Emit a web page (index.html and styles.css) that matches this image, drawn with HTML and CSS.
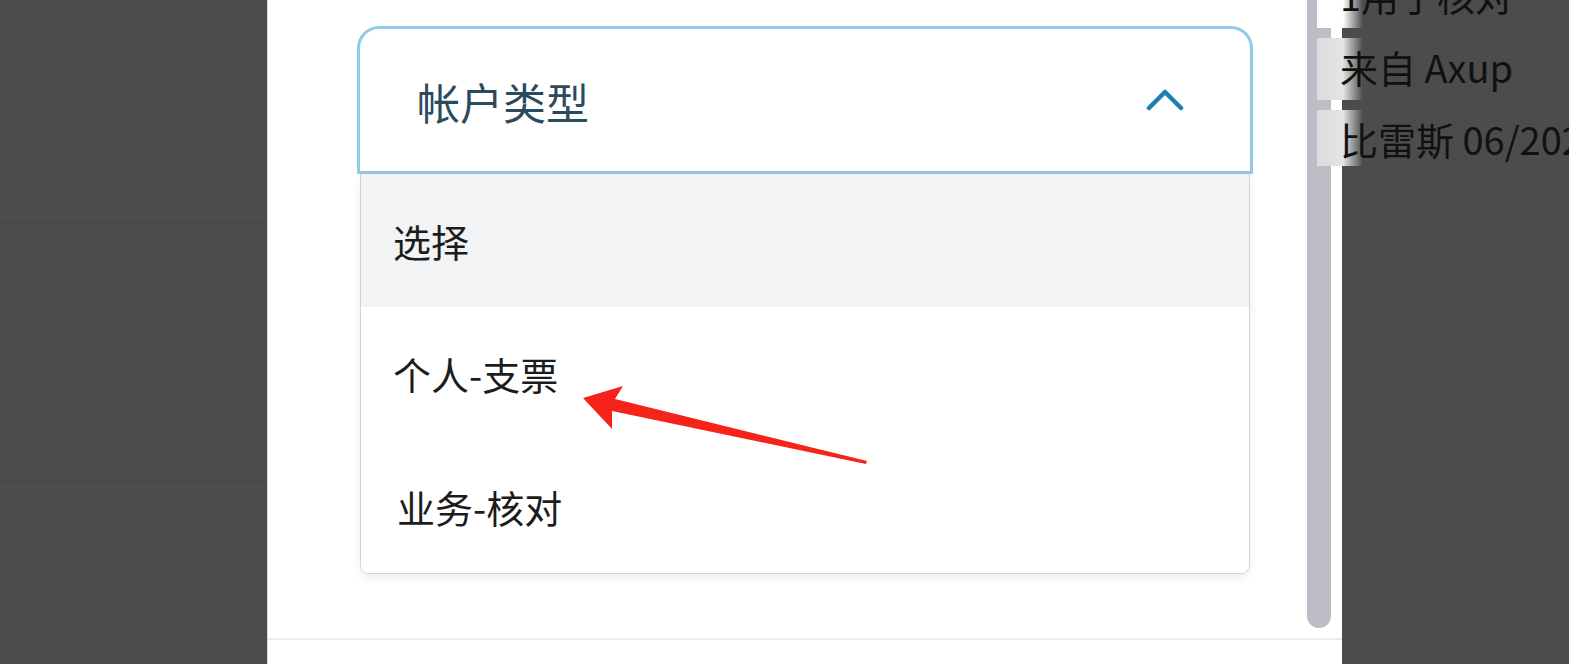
FILE: index.html
```html
<!DOCTYPE html>
<html lang="zh">
<head>
<meta charset="utf-8">
<title>帐户类型</title>
<link rel="stylesheet" href="styles.css">
</head>
<body>
<div class="page">
  <div class="backdrop backdrop-left">
    <div class="bd-row bd-r1"></div>
    <div class="bd-row bd-r2"></div>
    <div class="bd-row bd-r3"></div>
  </div>
  <div class="modal">
    <div class="modal-body">
      <div class="content">
        <div class="select">
          <div class="select-head">
            <span class="select-label">帐户类型</span>
            <svg class="chevron" width="40" height="24" viewBox="0 0 40 24" aria-hidden="true">
              <polyline points="3,20 19,4 35,20" fill="none" stroke="#1d7fb2" stroke-width="4.5" stroke-linecap="round" stroke-linejoin="round"/>
            </svg>
          </div>
          <ul class="options">
            <li class="option option-active">选择</li>
            <li class="option">个人-支票</li>
            <li class="option option-shift">业务-核对</li>
          </ul>
        </div>
      </div>
      <div class="scrollbar"></div>
    </div>
    <div class="modal-footer"></div>
  </div>
  <div class="backdrop backdrop-right"></div>

  <div class="side-tips">
    <div class="tip tip-white">1用于核对</div>
    <div class="tip">来自 Axup</div>
    <div class="tip tip-short">比雷斯 06/2020</div>
  </div>

  <svg class="annot" width="1569" height="664" viewBox="0 0 1569 664" aria-hidden="true">
    <polygon points="583,398 623,386 615,399 867,461 866,464 612,411 612,429" fill="#f5231a"/>
  </svg>
</div>
</body>
</html>
```
FILE: styles.css
```css
html, body {
  margin: 0;
  padding: 0;
}
body {
  background: #4c4c4c;
  font-family: "Noto Sans", "Noto Sans CJK SC", sans-serif;
  overflow: hidden;
}
.page {
  position: relative;
  width: 1569px;
  height: 664px;
  display: flex;
  overflow: hidden;
}
.backdrop {
  background: #4c4c4c;
  height: 664px;
}
.backdrop-left {
  width: 267px;
  display: flex;
  flex-direction: column;
}
.bd-row {
  border-bottom: 1px solid #464646;
}
.bd-r1 { height: 223px; }
.bd-r2 { height: 154px; }
.bd-r3 { height: 101px; }
.backdrop-right {
  flex: 1;
}
.modal {
  width: 1074px;
  border-left: 1px solid #d2d2d2;
  background: #fff;
  display: flex;
  flex-direction: column;
}
.modal-body {
  height: 638px;
  display: flex;
}
.content {
  flex: 1;
  padding: 26px 0 0 89px;
}
.select {
  width: 896px;
}
.select-head {
  height: 142px;
  border: 3px solid #8ecbe8;
  border-bottom-color: #98c6df;
  border-radius: 22px 22px 0 0;
  display: flex;
  align-items: center;
  justify-content: space-between;
  padding: 0 64px 0 57px;
}
.select-label {
  font-family: "Noto Sans CJK SC", sans-serif;
  font-size: 43px;
  color: #2c4a5d;
  line-height: 1;
  margin-top: 2px;
}
.chevron {
  display: block;
}
.options {
  list-style: none;
  margin: 0 3px;
  padding: 0;
  border: 1px solid #d2d2d4;
  border-top: none;
  border-radius: 0 0 9px 9px;
  box-shadow: 0 4px 10px rgba(0, 0, 0, 0.07);
  overflow: hidden;
}
.option {
  height: 133px;
  display: flex;
  align-items: center;
  padding-left: 32px;
  font-family: "Noto Sans CJK SC", sans-serif;
  font-size: 38px;
  color: #1c1c1c;
  background: #fff;
}
.option-active {
  background: #f1f3f5;
}
.option-shift {
  padding-left: 36px;
}
.scrollbar {
  width: 24px;
  height: 628px;
  background: #bebdc5;
  border-radius: 0 0 12px 12px;
  margin-right: 11px;
}
.modal-footer {
  border-top: 2px solid #ececef;
  flex: 1;
}
.side-tips {
  position: absolute;
  left: 1317px;
  top: -34px;
  display: flex;
  flex-direction: column;
  gap: 10px;
}
.tip {
  height: 62px;
  box-sizing: border-box;
  padding: 0 0 6px 23px;
  display: flex;
  align-items: center;
  white-space: nowrap;
  font-family: "Noto Sans CJK SC", sans-serif;
  font-size: 38px;
  color: #111;
  background: linear-gradient(to right, #dcdcdc 0, #e4e4e4 26px, #4c4c4c 46px, rgba(76, 76, 76, 0) 47px);
}
.tip-white {
  background: linear-gradient(to right, #ffffff 0, #ffffff 26px, #4c4c4c 46px, rgba(76, 76, 76, 0) 47px);
}
.tip-short {
  height: 56px;
  padding-bottom: 0;
}
.annot {
  position: absolute;
  left: 0;
  top: 0;
  pointer-events: none;
}
```
